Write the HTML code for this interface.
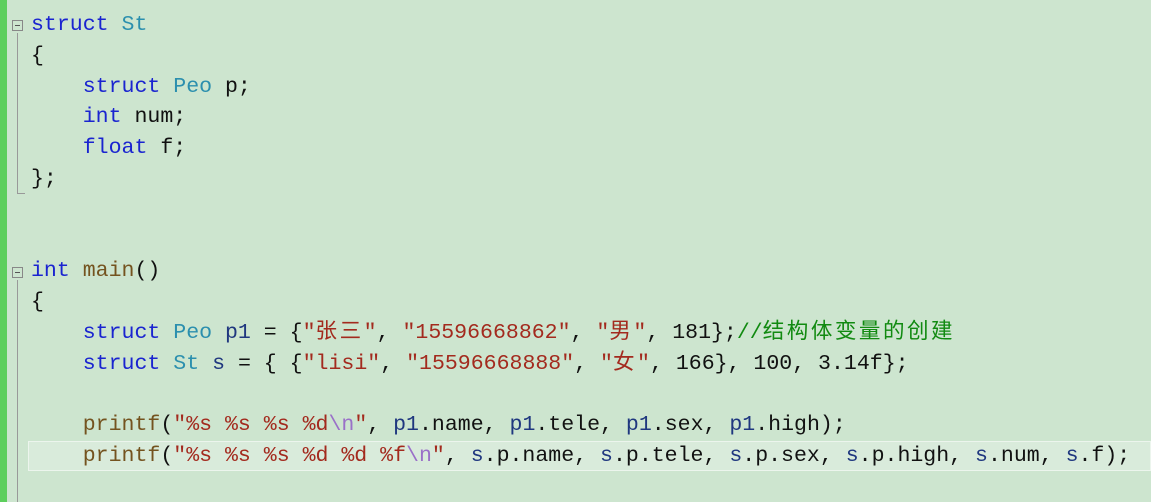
<!DOCTYPE html>
<html><head><meta charset="utf-8"><style>
body{margin:0;width:1151px;height:502px;background:#cde5cf;overflow:hidden;position:relative;font-family:"Liberation Mono","Noto Sans CJK SC",monospace;}
.bar{position:absolute;left:0;top:0;width:7px;height:502px;background:#5dcf5d;}
.code{position:absolute;left:31px;top:10px;font-size:21.55px;line-height:30.8px;white-space:pre;color:#111;}
.k{color:#1a24d0}.t{color:#2b8fae}.s{color:#a32a1e}.e{color:#9a70c8}.v{color:#1f377f}.f{color:#74531f}.c{color:#118a11}
.z{letter-spacing:2.5px}
.box{position:absolute;left:12px;width:11px;height:11px;border:1px solid #888;box-sizing:border-box;}
.box:after{content:"";position:absolute;left:2px;top:4px;width:5px;height:1px;background:#555;}
.vl{position:absolute;left:17px;width:1px;background:#999;}
.hl{position:absolute;left:28px;top:441px;width:1123px;height:30px;background:rgba(255,255,255,0.25);border:1px solid rgba(255,255,255,0.5);box-sizing:border-box}
</style></head><body>
<div class="bar"></div>
<div class="hl"></div>
<div class="box" style="top:20px"></div>
<div class="vl" style="top:33px;height:160px"></div>
<div class="vl" style="top:193px;height:1px;width:8px"></div>
<div class="box" style="top:267px"></div>
<div class="vl" style="top:280px;height:222px"></div>
<div class="code"><span class="k">struct</span> <span class="t">St</span>
{
    <span class="k">struct</span> <span class="t">Peo</span> p;
    <span class="k">int</span> num;
    <span class="k">float</span> f;
};


<span class="k">int</span> <span class="f">main</span>()
{
    <span class="k">struct</span> <span class="t">Peo</span> <span class="v">p1</span> = {<span class="s">"<span class="z">张三</span>"</span>, <span class="s">"15596668862"</span>, <span class="s">"<span class="z">男</span>"</span>, 181};<span class="c">//<span class="z">结构体变量的创建</span></span>
    <span class="k">struct</span> <span class="t">St</span> <span class="v">s</span> = { {<span class="s">"lisi"</span>, <span class="s">"15596668888"</span>, <span class="s">"<span class="z">女</span>"</span>, 166}, 100, 3.14f};

    <span class="f">printf</span>(<span class="s">"%s %s %s %d</span><span class="e">\n</span><span class="s">"</span>, <span class="v">p1</span>.name, <span class="v">p1</span>.tele, <span class="v">p1</span>.sex, <span class="v">p1</span>.high);
    <span class="f">printf</span>(<span class="s">"%s %s %s %d %d %f</span><span class="e">\n</span><span class="s">"</span>, <span class="v">s</span>.p.name, <span class="v">s</span>.p.tele, <span class="v">s</span>.p.sex, <span class="v">s</span>.p.high, <span class="v">s</span>.num, <span class="v">s</span>.f);</div>
</body></html>
